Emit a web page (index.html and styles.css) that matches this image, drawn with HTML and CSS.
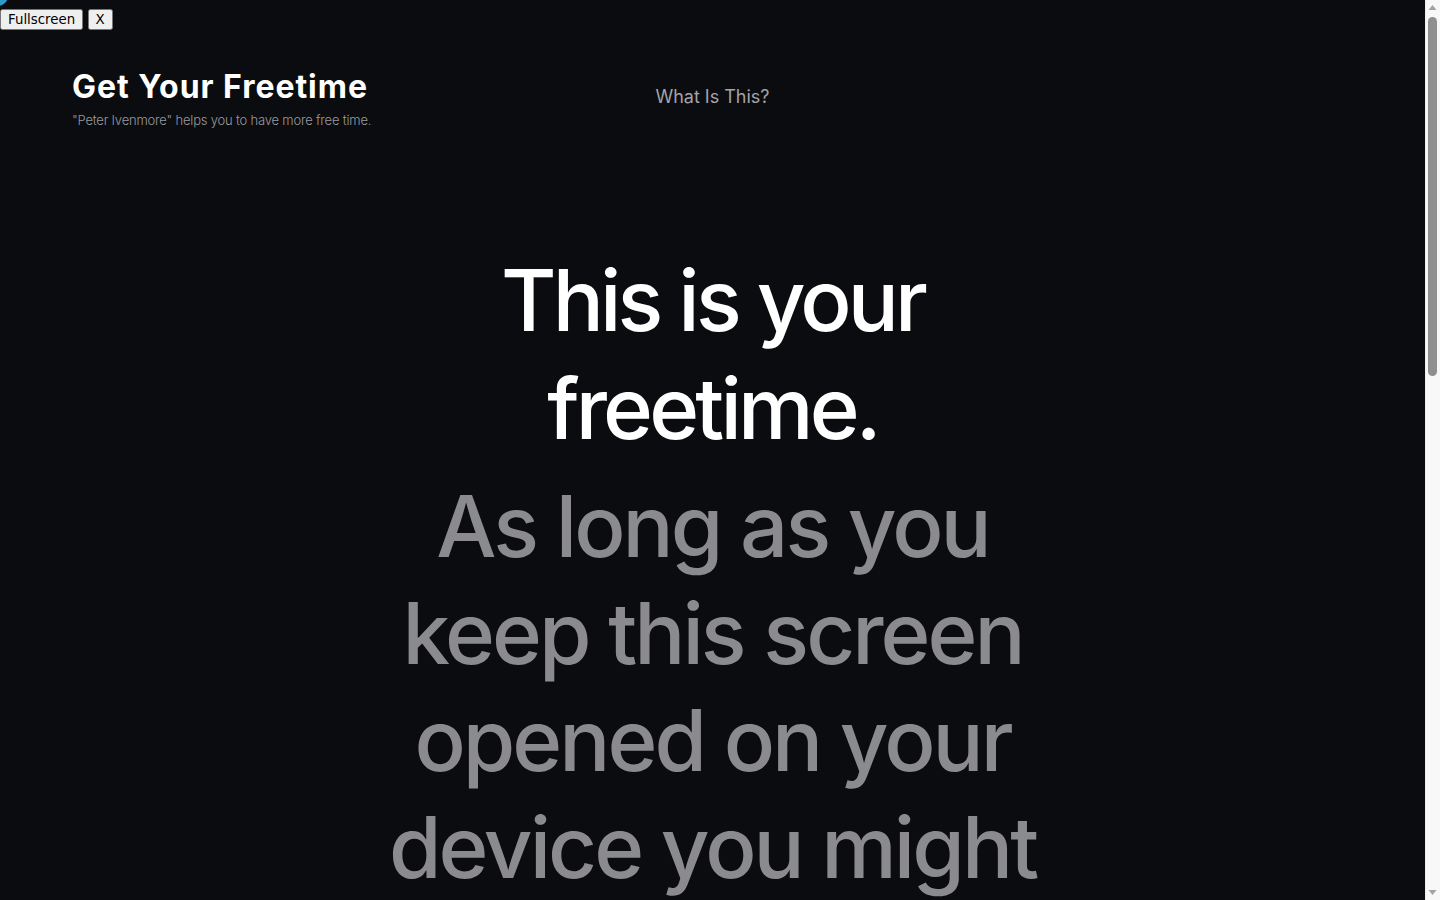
FILE: index.html
```html
<!DOCTYPE html>
<html lang="en">
<head>
<meta charset="utf-8">
<title>Get Your Freetime</title>
<link rel="stylesheet" href="styles.css">
</head>
<body>
<div class="page">
  <div class="dot"></div>
  <div class="toolbar">
    <button type="button">Fullscreen</button>
    <button type="button">X</button>
  </div>
  <header class="site-header">
    <div class="brand">
      <h2 class="brand-title">Get Your Freetime</h2>
      <p class="brand-sub">"Peter Ivenmore" helps you to have more free time.</p>
    </div>
    <nav class="nav">
      <a class="nav-link" href="#">What Is This?</a>
    </nav>
    <div></div>
  </header>
  <main class="hero">
    <h1 class="hero-title">This is your freetime.</h1>
    <p class="hero-text">As long as you keep this screen opened on your device you might think that you have nothing else to do. So just sit back, relax and enjoy every second of it.</p>
  </main>
</div>
<div class="scrollbar" aria-hidden="true">
  <div class="sb-btn">
    <svg width="15" height="15" viewBox="0 0 15 15"><polygon points="3.5,10 11.5,10 7.5,5" fill="#a3a3a3"/></svg>
  </div>
  <div class="sb-track">
    <div class="sb-thumb"></div>
  </div>
  <div class="sb-btn">
    <svg width="15" height="15" viewBox="0 0 15 15"><polygon points="3.5,5 11.5,5 7.5,10" fill="#a3a3a3"/></svg>
  </div>
</div>
</body>
</html>
```

FILE: styles.css
```css
html, body {
  margin: 0;
  padding: 0;
  height: 100%;
  overflow: hidden;
}

body {
  display: flex;
  background: #0b0c10;
  color: #ffffff;
  font-family: Inter, "Noto Sans", sans-serif;
}

.page {
  position: relative;
  flex: 1;
  min-width: 0;
  height: 100vh;
  overflow: hidden;
}

.dot {
  position: absolute;
  left: -12px;
  top: -14px;
  width: 20px;
  height: 20px;
  border-radius: 50%;
  background: #2b9bc8;
}

.toolbar {
  position: absolute;
  top: 8px;
  left: 0;
  z-index: 5;
}

.toolbar button {
  font-family: "DejaVu Sans", sans-serif;
  font-size: 13.333px;
}

.site-header {
  display: grid;
  grid-template-columns: 1fr auto 1fr;
  align-items: start;
  padding: 68px 72px 0 72px;
}

.brand-title {
  margin: 0;
  font-size: 32px;
  line-height: 1.2;
  font-weight: 700;
  color: #ffffff;
  letter-spacing: 0.03em;
}

.brand-sub {
  margin: 6px 0 0 0;
  font-size: 13px;
  line-height: 1.3;
  color: #9a9a9e;
  font-weight: 300;
  letter-spacing: -0.015em;
}

.nav {
  margin-top: 18px;
}

.nav-link {
  font-size: 18px;
  line-height: 1.2;
  color: #a3a3a8;
  text-decoration: none;
}

.hero {
  display: flex;
  flex-direction: column;
  align-items: center;
  text-align: center;
  margin-top: 118px;
}

.hero-title {
  margin: 0;
  max-width: 700px;
  font-size: 85px;
  line-height: 108px;
  font-weight: 500;
  color: #ffffff;
  letter-spacing: -0.045em;
}

.hero-text {
  margin: 10px 0 0 0;
  max-width: 700px;
  font-size: 85px;
  line-height: 107px;
  font-weight: 500;
  color: #8b8b8f;
  letter-spacing: -0.035em;
}

.scrollbar {
  display: flex;
  flex-direction: column;
  flex: 0 0 15px;
  width: 15px;
  height: 100vh;
  background: #f8f8f8;
  box-shadow: inset 1px 0 0 #ededed;
}

.sb-btn {
  flex: 0 0 15px;
  height: 15px;
  display: flex;
}

.sb-track {
  flex: 1;
  padding: 2px 3px 0 3px;
}

.sb-thumb {
  height: 359px;
  border-radius: 5px;
  background: #8f8f8f;
}
```
